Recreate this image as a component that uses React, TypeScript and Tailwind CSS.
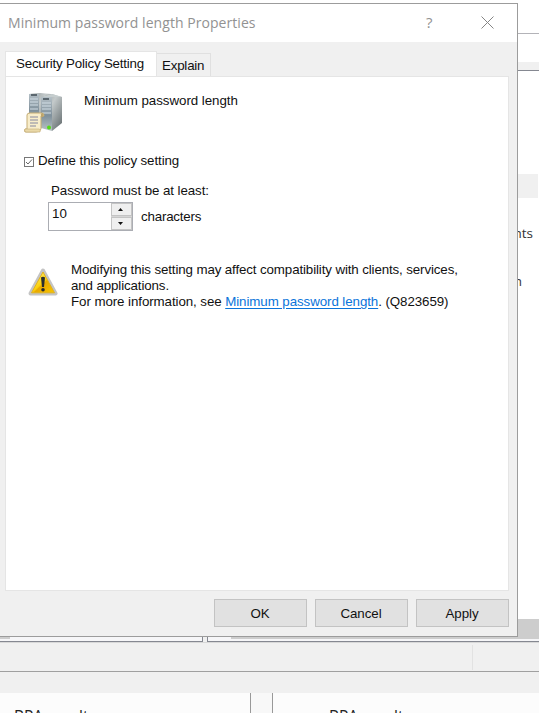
import type { ReactNode } from "react";

function ServerIcon() {
  return (
    <svg width="40" height="40" viewBox="0 0 40 40" className="shrink-0">
      <defs>
        <linearGradient id="side" x1="0" y1="0" x2="1" y2="1">
          <stop offset="0" stopColor="#8a9394" />
          <stop offset="0.4" stopColor="#c4cacb" />
          <stop offset="1" stopColor="#5d6668" />
        </linearGradient>
        <linearGradient id="front" x1="0" y1="0" x2="0" y2="1">
          <stop offset="0" stopColor="#b4bfc6" />
          <stop offset="0.55" stopColor="#7f909b" />
          <stop offset="1" stopColor="#b9c3c5" />
        </linearGradient>
      </defs>
      <path d="M5 1L16 0L27 1V34L6 28Z" fill="url(#side)" />
      <path d="M5 1H15V31H5Z" fill="url(#front)" />
      <path d="M7 2H13" stroke="#46535a" strokeWidth="1.6" />
      <path d="M6 6H14M6 9H14M6 12H14M6 16H14" stroke="#d2dee6" strokeWidth="1" />
      <path d="M17 4L28 1L38 4V30L28 38Z" fill="url(#side)" />
      <path d="M17 4H28V38L17 35Z" fill="url(#front)" />
      <path d="M17 4L28 1L38 4H28Z" fill="#c5cdce" />
      <path d="M19 6H25" stroke="#46535a" strokeWidth="1.6" />
      <path d="M18 10H27M18 13H27M18 16H27M18 20H27" stroke="#d2dee6" strokeWidth="1" />
      <circle cx="25" cy="34.5" r="2" fill="#55da19" />
      <path d="M3 22Q3 20 6 20H18Q20 20 20 23H17V36Q16 39 12 39H1Q0 38 1 36H3Z" fill="#f8edca" stroke="#c5ad75" strokeWidth="1" />
      <path d="M17 23Q16 20 19 20Q20 22 19 24H17" fill="#bea56b" />
      <path d="M1 36H15Q17 36 16 39H2Q0 38 1 36" fill="#ead9a8" stroke="#c5ad75" strokeWidth="0.6" />
      <path d="M6 24H14M6 27H14M6 30H14M6 33H12" stroke="#8688a0" strokeWidth="1" />
    </svg>
  );
}

function WarningIcon() {
  return (
    <svg width="30" height="28" viewBox="0 0 30 28" className="shrink-0">
      <defs>
        <linearGradient id="warn" x1="0" y1="0" x2="1" y2="1">
          <stop offset="0.15" stopColor="#ffee70" />
          <stop offset="0.5" stopColor="#fbd10c" />
          <stop offset="0.55" stopColor="#e9a900" />
          <stop offset="1" stopColor="#f8c600" />
        </linearGradient>
      </defs>
      <path d="M15 2.5L27.5 25.5H2.5Z" fill="#c4c4c4" stroke="#c4c4c4" strokeWidth="4" strokeLinejoin="round" />
      <path d="M15 4L26.5 24.8H3.5Z" fill="url(#warn)" stroke="#e2b21c" strokeWidth="1" strokeLinejoin="round" />
      <path d="M13 9.5Q15 8 17 9.5L16 19H14Z" fill="#272c30" />
      <circle cx="15" cy="21.8" r="1.8" fill="#272c30" />
    </svg>
  );
}

function Button({ children }: { children: ReactNode }) {
  return (
    <button className="h-7 w-[93px] border border-[#c3c3c3] bg-[#e1e1e1] pt-px text-[13.33px] leading-[26px] tracking-[-0.05px]">
      {children}
    </button>
  );
}

function SpinButton({ up }: { up?: boolean }) {
  return (
    <button className="flex h-[13px] w-[21px] items-center justify-center border border-[#c4c4c4] bg-[#efefef] pr-[3px]">
      <svg width="5" height="3" viewBox="0 0 5 3">
        <path d={up ? "M0 3L2.5 0L5 3Z" : "M0 0H5L2.5 3Z"} fill="#111" />
      </svg>
    </button>
  );
}

function Dialog() {
  return (
    <section className="flex h-[634px] w-[518px] shrink-0 flex-col border-y border-r border-[#9c9c9c] bg-[#f0f0f0]">
      <header className="flex h-[38px] shrink-0 items-center bg-white pl-2 text-[#929292]">
        <h1 className="w-[418px] -translate-y-px whitespace-nowrap font-['Open_Sans',sans-serif] text-[14px] tracking-[0.05px]">
          Minimum password length Properties
        </h1>
        <span className="w-[55px] -translate-y-px font-['Open_Sans',sans-serif] text-[15px]">?</span>
        <svg width="13" height="13" viewBox="0 0 13 13" className="-mt-px">
          <path d="M.5 .5L12.5 12.5M12.5 .5L.5 12.5" stroke="#858585" fill="none" />
        </svg>
      </header>
      <nav className="flex h-[34px] shrink-0 items-end pl-[5px]">
        <div className="-mb-px h-[26px] w-[152px] whitespace-nowrap border-x border-t border-[#e5e5e5] bg-white pl-[10px] text-[13.33px] leading-[23px] tracking-[-0.2px]">
          Security Policy Setting
        </div>
        <div className="h-[23px] w-[54px] border-r border-t border-[#e0e0e0] pl-[5px] text-[13.33px] leading-[23px] tracking-[-0.2px]">
          Explain
        </div>
      </nav>
      <main className="ml-[5px] h-[515px] w-[504px] shrink-0 border border-[#e5e5e5] bg-white text-[13.33px] leading-4">
        <div className="flex h-[76px] pl-[18px] pt-4">
          <ServerIcon />
          <p className="ml-5 whitespace-nowrap tracking-[-0.04px]">Minimum password length</p>
        </div>
        <div className="flex h-4 items-center pl-[18px]">
          <svg width="10" height="10" viewBox="0 0 10 10" className="mt-px">
            <rect x=".5" y=".5" width="9" height="9" fill="white" stroke="#777" />
            <path d="M2 5L4 7L8 2.5" fill="none" stroke="#666" />
          </svg>
          <span className="ml-1 tracking-[-0.1px]">Define this policy setting</span>
        </div>
        <p className="mt-[14px] pl-[45px] tracking-[-0.08px]">Password must be at least:</p>
        <div className="mt-[3px] flex pl-[42px]">
          <div className="flex h-[29px] w-[85px] border border-[#abadb3]">
            <span className="w-[62px] pl-[3px] pt-[3px]">10</span>
            <div className="flex flex-col gap-px bg-[#d5d5d5]">
              <SpinButton up />
              <SpinButton />
            </div>
          </div>
          <span className="ml-2 pt-[7px] tracking-[-0.2px]">characters</span>
        </div>
        <div className="mt-[31px] flex pl-[22px]">
          <div className="mt-[6px]"><WarningIcon /></div>
          <p className="ml-[13px] whitespace-nowrap tracking-[-0.12px]">
            Modifying this setting may affect compatibility with clients, services,
            <br />and applications.<br />
            <span className="tracking-[-0.08px]">
              For more information, see{" "}
              <a className="text-[#0a74da] underline underline-offset-2">Minimum password length</a>. (Q823659)
            </span>
          </p>
        </div>
      </main>
      <footer className="flex gap-2 pl-[213.5px] pt-2">
        <Button>OK</Button>
        <Button>Cancel</Button>
        <Button>Apply</Button>
      </footer>
    </section>
  );
}

export default function App() {
  return (
    <div className="flex h-[713px] w-[539px] flex-col overflow-hidden bg-white font-['Liberation_Sans',Arial,sans-serif] text-[#111]">
      <div className="flex h-[637px] shrink-0">
        <div className="pt-[3px]"><Dialog /></div>
        <aside className="flex w-[21px] flex-col overflow-hidden font-['Open_Sans',sans-serif] text-[13.5px] leading-5 text-[#333]">
          <div className="h-[34px] shrink-0 border-b border-[#b3b3b8]" />
          <div className="h-7 shrink-0" />
          <div className="h-[9px] shrink-0 border-b border-[#858891] bg-[#f0f0f0]" />
          <div className="mt-[103px] h-6 w-5 shrink-0 bg-[#f0f0f0]" />
          <div className="mt-[25px] flex w-[15px] justify-end overflow-hidden">nts</div>
          <div className="mt-7 flex w-[4px] justify-end overflow-hidden">n</div>
          <div className="mt-auto h-[18px] shrink-0 bg-[#cdcdcd]" />
        </aside>
      </div>
      <div className="flex h-[5px] shrink-0 bg-[#f0f0f0]">
        <div className="flex w-[203px] border-b border-r border-[#858891] bg-[#f6f6f8]">
          <div className="h-[2px] w-[10px] bg-[#cdcdcd]" />
        </div>
        <div className="ml-1 flex flex-1 justify-end border-b border-l border-[#858891] bg-[#f6f6f8]">
          <div className="h-[2px] w-[308px] bg-[#cdcdcd]" />
        </div>
      </div>
      <div className="h-[30px] shrink-0 border-b border-t border-b-[#a0a0a0] border-t-[#d8d8d8] bg-[#f0f0f0] pt-[2px]">
        <div className="h-[25px] w-[473px] border-r border-[#e2e2e2]" />
      </div>
      <div className="h-[21px] shrink-0 bg-[#f0f0f0]" />
      <div className="flex h-5 shrink-0 overflow-hidden bg-[#f8f8f8] font-['Open_Sans',sans-serif] text-[15.5px] leading-5 text-[#222]">
        <div className="w-[251px] border-r border-[#999] bg-[#fcfcfc] pl-[14px] pt-[13px]">BPA results</div>
        <div className="ml-[21px] flex-1 border-l border-[#999] bg-[#fcfcfc] pl-[56px] pt-[13px]">BPA results</div>
      </div>
    </div>
  );
}
